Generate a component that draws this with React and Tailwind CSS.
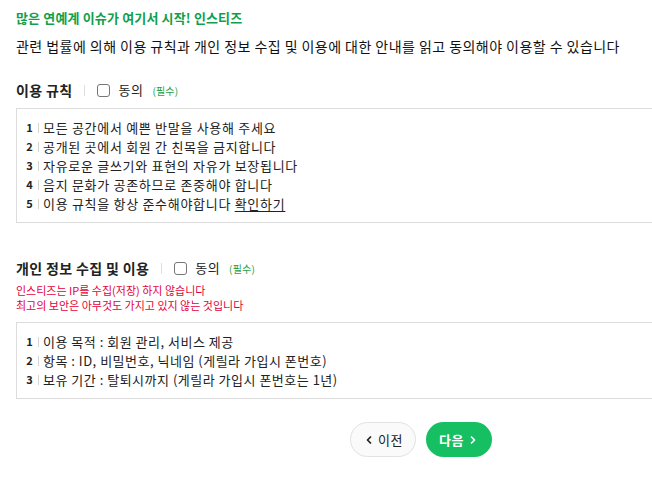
import React from "react";
import { ChevronLeft, ChevronRight } from "lucide-react";

const rules = [
  "모든 공간에서 예쁜 반말을 사용해 주세요",
  "공개된 곳에서 회원 간 친목을 금지합니다",
  "자유로운 글쓰기와 표현의 자유가 보장됩니다",
  "음지 문화가 공존하므로 존중해야 합니다",
];

const privacy = [
  "이용 목적 : 회원 관리, 서비스 제공",
  "항목 : ID, 비밀번호, 닉네임 (게릴라 가입시 폰번호)",
  "보유 기간 : 탈퇴시까지 (게릴라 가입시 폰번호는 1년)",
];

function Item({ n, tight, children }) {
  return (
    <div className="flex items-center h-[19px] text-[13px] text-[#222]">
      <span className="w-[7px] text-[11px] font-bold text-[#222] text-center">{n}</span>
      <span className="ml-[5px] mr-[4px] w-px h-[10px] bg-[#d4d4d4]"></span>
      <span className={tight ? "tracking-[0.5px]" : "tracking-[0.7px]"}>{children}</span>
    </div>
  );
}

function Heading({ title }) {
  return (
    <div className="flex items-center h-[20px]">
      <span className="text-[14px] font-bold text-[#222] tracking-[0.35px]">{title}</span>
      <span className="ml-[12px] w-px h-[11px] bg-[#dedede]"></span>
      <span className="ml-[12px] w-[13px] h-[13px] rounded-[3px] border border-[#767676] bg-white"></span>
      <span className="ml-[8px] text-[13px] text-[#222] tracking-[0.5px]">동의</span>
      <span className="ml-[9px] text-[10px] text-[#1f9e45] tracking-[0.2px]">(필수)</span>
    </div>
  );
}

export default function App() {
  return (
    <div
      className="w-[652px] h-[499px] overflow-hidden bg-white"
      style={{ fontFamily: '"Noto Sans CJK KR", "Noto Sans", sans-serif' }}
    >
      <div className="w-[810px] ml-[16px] pt-[8px]">
        <div className="h-[20px] flex items-center text-[13px] font-bold text-[#0f9f4c] tracking-[0.15px]">
          많은 연예계 이슈가 여기서 시작! 인스티즈
        </div>
        <div className="mt-[8px] h-[20px] flex items-center text-[14px] text-[#111] tracking-[0.45px]">
          관련 법률에 의해 이용 규칙과 개인 정보 수집 및 이용에 대한 안내를 읽고 동의해야 이용할 수 있습니다
        </div>

        <div className="mt-[24px]">
          <Heading title="이용 규칙" />
        </div>
        <div className="mt-[8px] border border-[#dcdcdc] py-[9px] pl-[9px]">
          {rules.map((r, i) => (
            <Item key={i} n={i + 1}>{r}</Item>
          ))}
          <Item n={5}>
            이용 규칙을 항상 준수해야합니다 <span className="underline underline-offset-2">확인하기</span>
          </Item>
        </div>

        <div className="mt-[35px]">
          <Heading title="개인 정보 수집 및 이용" />
        </div>
        <div className="mt-[5px] text-[11px] leading-[15px] text-[#e4003b]">
          <div>인스티즈는 IP를 수집(저장) 하지 않습니다</div>
          <div>최고의 보안은 아무것도 가지고 있지 않는 것입니다</div>
        </div>
        <div className="mt-[9px] border border-[#dcdcdc] py-[9px] pl-[9px]">
          {privacy.map((r, i) => (
            <Item key={i} n={i + 1} tight>{r}</Item>
          ))}
        </div>

        <div className="mt-[23px] flex justify-center gap-[10px]">
          <button className="w-[66px] h-[35px] rounded-full border border-[#e2e2e2] bg-[#fafafa] flex items-center justify-center text-[13px] text-[#222] tracking-[0.5px]">
            <ChevronLeft size={12} strokeWidth={3.5} className="mr-[3px]" />
            이전
          </button>
          <button className="w-[66px] h-[35px] rounded-full bg-[#17bf63] flex items-center justify-center text-[13px] font-bold text-white tracking-[0.5px]">
            다음
            <ChevronRight size={12} strokeWidth={3.5} className="ml-[3px]" />
          </button>
        </div>
      </div>
    </div>
  );
}
